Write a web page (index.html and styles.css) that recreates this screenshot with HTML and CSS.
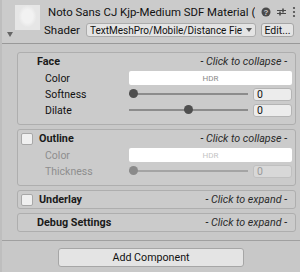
FILE: index.html
```html
<!DOCTYPE html>
<html lang="en">
<head>
  <meta charset="UTF-8" />
  <title>Material Inspector</title>
  <link rel="stylesheet" href="styles.css">
</head>
<body>
  <div class="inspector">
    <header class="mat-header">
      <div class="head-left">
        <div class="thumb"></div>
        <span class="fold"></span>
      </div>
      <div class="head-right">
        <div class="title-row">
          <div class="title">Noto Sans CJ Kjp-Medium SDF Material (</div>
          <div class="head-icons">
            <svg width="10" height="10" viewBox="0 0 10 10"><circle cx="5" cy="5" r="4.5" fill="#4a4a4a"/><text x="5" y="8" text-anchor="middle" font-size="8" font-weight="bold" fill="#cbcbcb" font-family="Liberation Sans, sans-serif">?</text></svg>
            <svg width="11" height="10" viewBox="0 0 11 10"><path d="M1 3.5h9M1 6.5h9" stroke="#4a4a4a" stroke-width="1.2"/><path d="M7 1.5v4M4 4.5v4" stroke="#4a4a4a" stroke-width="1.6"/></svg>
            <svg width="4" height="12" viewBox="0 0 4 12"><circle cx="2" cy="2" r="1.1" fill="#4a4a4a"/><circle cx="2" cy="6" r="1.1" fill="#4a4a4a"/><circle cx="2" cy="10" r="1.1" fill="#4a4a4a"/></svg>
          </div>
        </div>
        <div class="shader-row">
          <span class="shader-label">Shader</span>
          <div class="dropdown">
            <span class="dropdown-text">TextMeshPro/Mobile/Distance Fie</span>
            <span class="caret"></span>
          </div>
          <button class="btn edit-btn">Edit...</button>
        </div>
      </div>
    </header>

    <main class="sections">
      <section class="panel">
        <div class="panel-head">
          <span class="panel-title">Face</span>
          <span class="hint">- Click to collapse -</span>
        </div>
        <div class="prop">
          <span class="prop-label">Color</span>
          <div class="color-field">HDR</div>
        </div>
        <div class="prop">
          <span class="prop-label">Softness</span>
          <div class="slider">
            <div class="track"><span class="knob"></span></div>
            <div class="num">0</div>
          </div>
        </div>
        <div class="prop">
          <span class="prop-label">Dilate</span>
          <div class="slider">
            <div class="track"><span class="knob mid"></span></div>
            <div class="num">0</div>
          </div>
        </div>
      </section>

      <section class="panel disabled">
        <div class="panel-head">
          <span class="check"></span>
          <span class="panel-title">Outline</span>
          <span class="hint">- Click to collapse -</span>
        </div>
        <div class="prop">
          <span class="prop-label">Color</span>
          <div class="color-field">HDR</div>
        </div>
        <div class="prop">
          <span class="prop-label">Thickness</span>
          <div class="slider">
            <div class="track"><span class="knob"></span></div>
            <div class="num">0</div>
          </div>
        </div>
      </section>

      <section class="panel collapsed">
        <div class="panel-head">
          <span class="check"></span>
          <span class="panel-title">Underlay</span>
          <span class="hint">- Click to expand -</span>
        </div>
      </section>

      <section class="panel collapsed">
        <div class="panel-head">
          <span class="panel-title">Debug Settings</span>
          <span class="hint">- Click to expand -</span>
        </div>
      </section>
    </main>

    <div class="footer">
      <button class="btn add-btn">Add Component</button>
    </div>
  </div>
</body>
</html>
```

FILE: styles.css
```css
body {
  margin: 0;
  background: #c8c8c8;
  font-family: Roboto, 'Liberation Sans', sans-serif;
  font-size: 11px;
  color: #111;
  width: 300px;
  height: 272px;
  overflow: hidden;
}

.inspector {
  border-left: 2px solid #bebebe;
  height: 272px;
}

.mat-header {
  display: flex;
  height: 43px;
  border-bottom: 1px solid #999;
  background: #cbcbcb;
}

.head-left {
  width: 42px;
  flex-shrink: 0;
  display: flex;
  flex-direction: column;
}

.thumb {
  width: 25px;
  height: 25px;
  margin: 5px 0 0 13px;
  background: radial-gradient(ellipse 9px 11px at 50% 45%, #f2f2f2 60%, #e6e6e6 100%);
  background-color: #e4e4e4;
}

.fold {
  width: 0;
  height: 0;
  margin: 2px 0 0 5px;
  border-left: 3px solid transparent;
  border-right: 3px solid transparent;
  border-top: 5px solid #666;
}

.head-right {
  flex: 1;
  min-width: 0;
  display: flex;
  flex-direction: column;
}

.title-row {
  display: flex;
  align-items: center;
  height: 14px;
  margin-top: 5px;
}

.title {
  flex: 1;
  min-width: 0;
  font-size: 11.4px;
  padding-left: 4px;
  white-space: nowrap;
  overflow: hidden;
}

.head-icons {
  flex-shrink: 0;
  display: flex;
  align-items: center;
  gap: 5px;
  padding-right: 4px;
  margin-left: 6px;
}

.shader-row {
  display: flex;
  align-items: center;
  margin-top: 4px;
  height: 14px;
}

.shader-label {
  width: 42px;
  flex-shrink: 0;
  font-size: 11.5px;
}

.dropdown {
  width: 170px;
  flex-shrink: 0;
  height: 14px;
  display: flex;
  align-items: center;
  padding: 0 3px 0 3px;
  box-sizing: border-box;
  background: #e4e4e4;
  border: 1px solid #acacac;
  border-radius: 3px;
  font-size: 10px;
}

.dropdown-text {
  flex: 1;
  min-width: 0;
  white-space: nowrap;
  overflow: hidden;
}

.caret {
  flex-shrink: 0;
  border-left: 3px solid transparent;
  border-right: 3px solid transparent;
  border-top: 4px solid #555;
  margin-left: 2px;
}

.btn {
  font-family: inherit;
  font-size: 10.5px;
  color: #111;
  background: #e4e4e4;
  border: 1px solid #a6a6a6;
  border-radius: 3px;
  padding: 0;
}

.edit-btn {
  flex-shrink: 0;
  width: 33px;
  height: 14px;
  margin-left: 5px;
}

.sections {
  padding: 8px 4px 0 15px;
  display: flex;
  flex-direction: column;
  gap: 4px;
}

.panel {
  border: 1px solid #aeaeae;
  border-radius: 3px;
  background: #cbcbcb;
  padding-bottom: 6px;
}

.panel.collapsed {
  padding-bottom: 0;
}

.panel-head {
  display: flex;
  align-items: center;
  height: 17px;
  padding: 0 8px 0 19px;
}

.check {
  width: 10px;
  height: 10px;
  margin-left: -16px;
  margin-right: 6px;
  background: #f0f0f0;
  border: 1px solid #a8a8a8;
  border-radius: 2px;
}

.panel-title {
  font-weight: bold;
  font-size: 10.8px;
  color: #1a1a1a;
}

.hint {
  margin-left: auto;
  font-style: italic;
  font-size: 10.7px;
  color: #2a2a2a;
}

.prop {
  display: flex;
  align-items: center;
  height: 16px;
  padding: 0 3px 0 27px;
}

.prop-label {
  width: 84px;
  flex-shrink: 0;
  font-size: 10.5px;
}

.color-field {
  flex: 1;
  height: 14px;
  background: #fff;
  border-radius: 2px;
  font-size: 8px;
  color: #8a8a8a;
  display: flex;
  align-items: center;
  justify-content: center;
}

.slider {
  flex: 1;
  display: flex;
  align-items: center;
}

.track {
  position: relative;
  flex: 1;
  height: 2px;
  background: #8c8c8c;
  margin-right: 5px;
}

.knob {
  position: absolute;
  top: -4px;
  left: 0;
  width: 9px;
  height: 9px;
  border-radius: 50%;
  background: #4f4f4f;
}

.knob.mid {
  left: calc(50% - 4.5px);
}

.num {
  width: 39px;
  height: 13px;
  box-sizing: border-box;
  padding-left: 3px;
  line-height: 11px;
  background: #ececec;
  border: 1px solid #b4b4b4;
  border-radius: 3px;
  font-size: 10.5px;
}

.disabled .prop-label {
  color: #8e8e8e;
}

.disabled .color-field {
  color: #c4c4c4;
}

.disabled .knob {
  background: #8a8a8a;
}

.disabled .track {
  background: #a4a4a4;
}

.disabled .num {
  color: #9a9a9a;
  background: #d8d8d8;
  border-color: #c0c0c0;
}

.footer {
  margin-top: 8px;
  border-top: 1px solid #a0a0a0;
  display: flex;
  justify-content: center;
  padding-top: 7px;
}

.add-btn {
  width: 186px;
  height: 19px;
  font-size: 10.7px;
}
```
